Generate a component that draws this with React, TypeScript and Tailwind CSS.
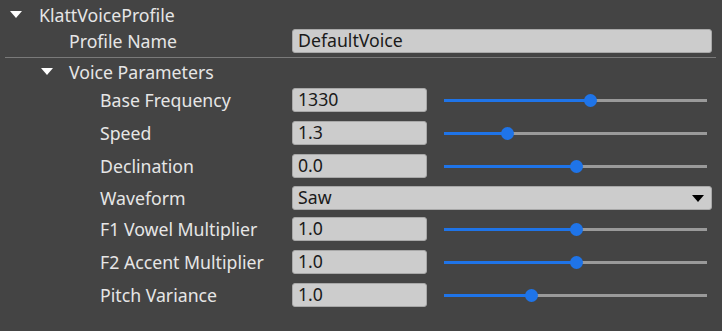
import React from 'react';

interface Param {
  label: string;
  value: string;
  knob?: number; // knob center x, relative to track start
  select?: boolean;
  gap: string;
}

const params: Param[] = [
  { label: 'Base Frequency', value: '1330', knob: 146, gap: 'mt-[3px]' },
  { label: 'Speed', value: '1.3', knob: 63, gap: 'mt-[9px]' },
  { label: 'Declination', value: '0.0', knob: 132, gap: 'mt-[9px]' },
  { label: 'Waveform', value: 'Saw', select: true, gap: 'mt-[8px]' },
  { label: 'F1 Vowel Multiplier', value: '1.0', knob: 132, gap: 'mt-[7px]' },
  { label: 'F2 Accent Multiplier', value: '1.0', knob: 132, gap: 'mt-[9px]' },
  { label: 'Pitch Variance', value: '1.0', knob: 87, gap: 'mt-[9px]' },
];

function Caret({ className = '' }: { className?: string }) {
  return (
    <svg width="12" height="7" viewBox="0 0 12 7" className={className}>
      <path d="M0 0 H12 L6 7 Z" fill="currentColor" />
    </svg>
  );
}

function Slider({ knob }: { knob: number }) {
  return (
    <div className="relative w-[263px] h-[12px] ml-[17px] flex items-center">
      <div className="h-[3px] bg-[#1f74e8]" style={{ width: knob }} />
      <div className="h-[3px] flex-1 bg-[#9a9a9a]" />
      <div
        className="absolute top-0 w-[13px] h-[13px] -mt-[0.5px] rounded-full bg-[#1f74e8]"
        style={{ left: knob - 6.5 }}
      />
    </div>
  );
}

export default function App() {
  return (
    <div
      className="w-[722px] h-[331px] bg-[#444444] text-[#e6e6e6] text-[17.7px] overflow-hidden"
      style={{ fontFamily: '"Noto Sans", "Open Sans", sans-serif' }}
    >
      {/* header */}
      <div className="h-[29px] flex items-center">
        <Caret className="ml-[10px] text-white" />
        <span className="ml-[17px] pt-[2px] leading-none">KlattVoiceProfile</span>
      </div>

      {/* profile name */}
      <div className="h-[24px] flex items-center">
        <span className="pl-[69px] w-[292px] pt-[2px] leading-none">Profile Name</span>
        <div className="w-[420px] h-[24px] rounded-[3px] bg-[#cccccc] border border-[#a8a8a8] text-[#1a1a1a] flex items-center px-[5px] leading-none">
          DefaultVoice
        </div>
      </div>

      <div className="mt-[4px] ml-[5px] mr-[6px] h-px bg-[#7a7a7a]" />

      {/* voice parameters */}
      <div className="h-[27px] flex items-center">
        <Caret className="ml-[41px] text-white" />
        <span className="ml-[16px] pt-[2px] leading-none">Voice Parameters</span>
      </div>

      <div className="flex flex-col">
        {params.map(p => (
          <div key={p.label} className={`${p.gap} h-[24px] flex items-center`}>
            <span className="pl-[100px] w-[292px] pt-[2px] leading-none">{p.label}</span>
            {p.select ? (
              <div className="w-[420px] h-[24px] rounded-[3px] bg-[#cccccc] border border-[#a8a8a8] text-[#1a1a1a] flex items-center justify-between pl-[5px] pr-[7px] leading-none">
                <span>{p.value}</span>
                <Caret className="text-black" />
              </div>
            ) : (
              <>
                <div className="w-[135px] h-[24px] rounded-[3px] bg-[#cccccc] border border-[#a8a8a8] text-[#1a1a1a] flex items-center px-[5px] leading-none">
                  {p.value}
                </div>
                <Slider knob={p.knob ?? 0} />
              </>
            )}
          </div>
        ))}
      </div>
    </div>
  );
}
